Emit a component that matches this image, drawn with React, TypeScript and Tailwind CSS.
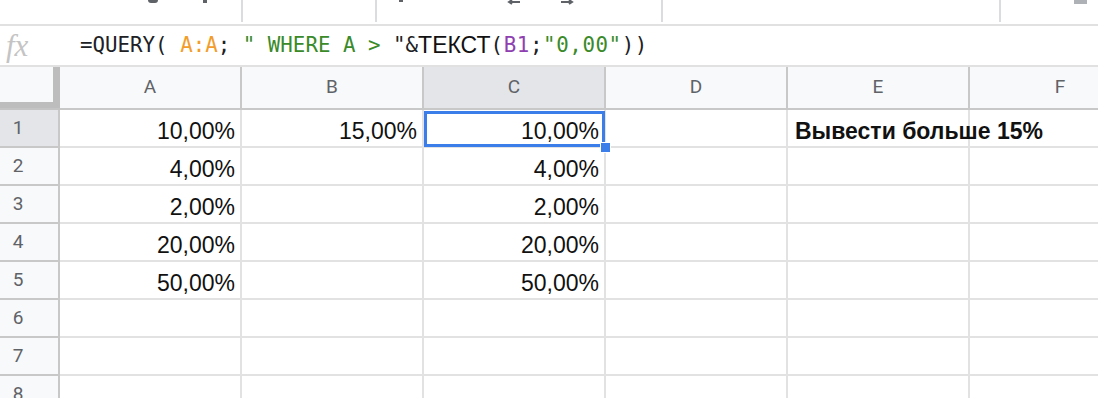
import React from "react";

const COLS = ["A", "B", "C", "D", "E", "F"];

type Cell = { text: string; bold?: boolean };

const DATA: Record<number, Record<string, Cell>> = {
  1: {
    A: { text: "10,00%" },
    B: { text: "15,00%" },
    C: { text: "10,00%" },
    E: { text: "Вывести больше 15%", bold: true },
  },
  2: { A: { text: "4,00%" }, C: { text: "4,00%" } },
  3: { A: { text: "2,00%" }, C: { text: "2,00%" } },
  4: { A: { text: "20,00%" }, C: { text: "20,00%" } },
  5: { A: { text: "50,00%" }, C: { text: "50,00%" } },
};

const ROW_NUMS = [1, 2, 3, 4, 5, 6, 7, 8];

const mono = { fontFamily: '"DejaVu Sans Mono", monospace' };

const Sep = ({ className }: { className: string }) => (
  <div className={`h-[22px] w-[2px] shrink-0 bg-[#dadce0] ${className}`} />
);

const Toolbar = () => (
  <div className="flex h-[24px] items-start overflow-hidden bg-white">
    <div className="ml-[148px] h-[3px] w-[10px] shrink-0 rounded-b-sm bg-[#5f6368]" />
    <div className="ml-[45px] h-[3px] w-[4px] shrink-0 bg-[#5f6368]" />
    <Sep className="ml-[34px]" />
    <Sep className="ml-[132px]" />
    <div className="ml-[22px] h-[2px] w-[4px] shrink-0 bg-[#5f6368]" />
    <svg className="ml-[104px] shrink-0" width="14" height="8" viewBox="0 0 14 8">
      <path d="M13 2H3M5 0L2 2L5 4" fill="none" stroke="#5f6368" strokeWidth="2" />
    </svg>
    <svg className="ml-[39px] shrink-0" width="14" height="8" viewBox="0 0 14 8">
      <path d="M1 2H11M9 0L12 2L9 4" fill="none" stroke="#5f6368" strokeWidth="2" />
    </svg>
    <Sep className="ml-[87px]" />
    <Sep className="ml-[336px]" />
    <div className="ml-[73px] h-[4px] w-[13px] shrink-0 bg-[#aeb2b6]" />
  </div>
);

const FormulaBar = () => (
  <div className="flex h-[43px] items-center border-y-2 border-[#e1e1e1] bg-white">
    <span
      className="w-[80px] shrink-0 pl-[6px] text-[31px] italic leading-none text-[#c4c4c4]"
      style={{ fontFamily: '"Liberation Serif", serif' }}
    >
      fx
    </span>
    <div className="flex items-center whitespace-pre text-[20.8px] leading-none text-[#202124]" style={mono}>
      <span>=QUERY( </span>
      <span className="text-[#f29d2b]">A:A</span>
      <span>; </span>
      <span className="text-[#3a8a2a]">" WHERE A &gt; </span>
      <span>"&amp;</span>
      <span
        className="text-[23px] text-[#111]"
        style={{ fontFamily: '"Liberation Sans", Arial, sans-serif' }}
      >
        ТЕКСТ
      </span>
      <span className="tracking-[0.6px]">(</span>
      <span className="tracking-[0.6px] text-[#8e3fb0]">B1</span>
      <span className="tracking-[0.6px]">;</span>
      <span className="tracking-[0.6px] text-[#3a8a2a]">"0,00"</span>
      <span className="tracking-[0.6px]">))</span>
    </div>
  </div>
);

const HeaderRow = () => (
  <div className="grid grid-cols-[60px_repeat(6,182px)]">
    <div className="relative h-[43px] border-b-2 border-[#c4c4c4] bg-[#f8f9fa]">
      <div className="absolute right-0 top-0 h-full w-[7px] bg-[#bdbdbd]" />
      <div className="absolute bottom-0 left-0 h-[6px] w-full bg-[#bdbdbd]" />
    </div>
    {COLS.map((c) => (
      <div
        key={c}
        className={`flex h-[43px] items-center justify-center border-b-2 border-r-2 border-[#c8c8c8] text-[19px] text-[#5f6368] ${
          c === "C" ? "bg-[#e3e5e8]" : "bg-[#f8f9fa]"
        }`}
        style={{ fontFamily: "Roboto, Arial, sans-serif" }}
      >
        {c}
      </div>
    ))}
  </div>
);

const DataRow = ({ n }: { n: number }) => {
  const row = DATA[n] || {};
  return (
    <div className="grid grid-cols-[60px_repeat(6,182px)]">
      <div
        className={`flex h-[38px] items-center border-b-2 border-r-2 border-[#c8c8c8] text-[19px] text-[#5f6368] ${
          n === 1 ? "bg-[#e3e5e8]" : "bg-[#f8f9fa]"
        }`}
        style={{ fontFamily: "Roboto, Arial, sans-serif" }}
      >
        <span className="w-[36px] text-center">{n}</span>
      </div>
      {COLS.map((c) => {
        const cell = row[c];
        const selected = n === 1 && c === "C";
        return (
          <div
            key={c}
            className={`relative flex h-[38px] items-end whitespace-nowrap border-b-2 border-r-2 border-[#e2e2e2] pb-[3px] text-[23px] leading-none text-[#111] ${
              cell?.bold ? "justify-start pl-[7px] font-bold" : "justify-end pr-[5px]"
            } ${selected ? "z-10" : ""}`}
            style={{ fontFamily: '"Liberation Sans", Arial, sans-serif' }}
          >
            {cell?.text}
            {selected && (
              <>
                <div className="absolute -bottom-[1px] left-0 right-[-1px] top-[1px] border-[3px] border-[#3b7de9]" />
                <div className="absolute left-[176px] top-[32px] h-[11px] w-[11px] border border-white bg-[#3b7de9]" />
              </>
            )}
          </div>
        );
      })}
    </div>
  );
};

export default function App() {
  return (
    <div className="h-[398px] w-[1098px] overflow-hidden bg-white">
      <Toolbar />
      <FormulaBar />
      <HeaderRow />
      {ROW_NUMS.map((n) => (
        <DataRow key={n} n={n} />
      ))}
    </div>
  );
}
